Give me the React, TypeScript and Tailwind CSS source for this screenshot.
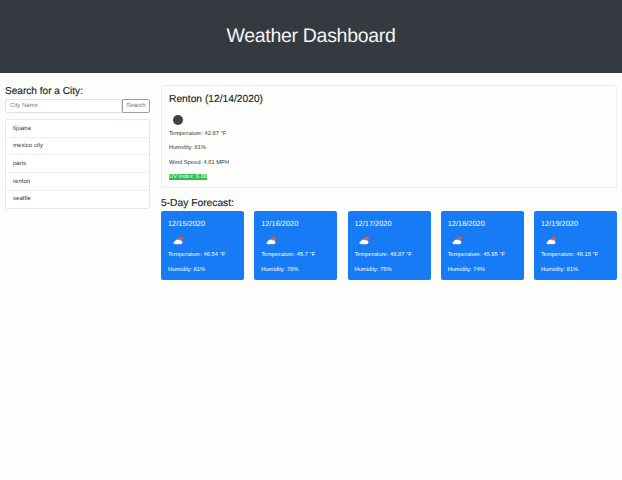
const cities = ["tijuana", "mexico city", "paris", "renton", "seattle"];
const forecast = [
  { date: "12/15/2020", temp: "46.54", hum: "81" },
  { date: "12/16/2020", temp: "45.7", hum: "78" },
  { date: "12/17/2020", temp: "48.87", hum: "75" },
  { date: "12/18/2020", temp: "45.95", hum: "74" },
  { date: "12/19/2020", temp: "46.15", hum: "81" },
];

function CloudIcon() {
  return (
    <svg width="11" height="9.500" viewBox="0 0 13 11" className="block">
      <circle cx="9" cy="3.200" r="2.700" fill="#e8573f" />
      <path d="M2.800 9.500c-2.800 0-2.800-3.200-.4-3.400C3 4.200 5.800 3.200 7.400 5c2.400-.5 3.900.9 3.700 2.500-.1 1.300-1.100 2-2.300 2z" fill="#ffffff" />
      <path d="M3.500 10.100h5" stroke="#5f86c4" strokeWidth="1" />
    </svg>
  );
}

export default function App() {
  return (
    <div className="min-h-[480px] bg-[#fdfdfb] font-['Liberation_Sans',sans-serif] text-[#212529] [text-rendering:geometricPrecision]">
      <header className="flex h-[73px] items-center justify-center bg-[#343a40]">
        <h1 className="text-[19.500px] leading-none tracking-[-0.3px] text-[#f4f5f5]">Weather Dashboard</h1>
      </header>
      <main className="flex items-start gap-[11px] pl-[5px] pr-[5px] pt-[12px]">
        <aside className="w-[145px] shrink-0">
          <h2 className="text-[10.100px] leading-[14px] [-webkit-text-stroke:0.15px]">Search for a City:</h2>
          <div className="flex h-[14px] text-[6px]">
            <div className="flex flex-1 items-center rounded-l-[2px] border border-[#dfe2e6] bg-white pl-[4px] text-[#7b8288]">City Name</div>
            <div className="flex w-[28px] items-center justify-center rounded-r-[2px] border border-[#9aa0a5] text-[#6c757d]">Search</div>
          </div>
          <ul className="mt-[6px] flex h-[89.500px] flex-col rounded-[2px] border border-[#e9e9e9] bg-white">
            {cities.map((c, i) => (
              <li key={c} className={`flex flex-1 items-center pl-[7px] pt-[1.500px] text-[6.070px] text-[#343a40] ${i ? "border-t border-[#efefef]" : ""}`}>{c}</li>
            ))}
          </ul>
        </aside>
        <section className="flex-1">
          <div className="h-[103px] rounded-[2px] border border-[#ececec] bg-[#fdfdfb] pl-[7px] pt-[7px]">
            <h2 className="text-[10.250px] leading-[13px] [-webkit-text-stroke:0.15px]">Renton (12/14/2020)</h2>
            <div className="ml-[4px] mt-[9px] h-[10px] w-[10px] rounded-full bg-[#3f4145]" />
            <div className="mt-[4.500px] flex flex-col gap-[6.600px] text-[5.760px] leading-[8px] text-[#343a40]">
              <p>Temperature: 42.87 °F</p>
              <p>Humidity: 81%</p>
              <p>Wind Speed: 4.61 MPH</p>
              <p><span className="bg-[#28c050] text-white">UV Index: 0.68</span></p>
            </div>
          </div>
          <h2 className="mb-[1px] mt-[9px] text-[10.250px] leading-[13px] [-webkit-text-stroke:0.15px]">5-Day Forecast:</h2>
          <div className="flex justify-between">
            {forecast.map((f) => (
              <div key={f.date} className="h-[69px] w-[83px] rounded-[2px] bg-[#177bf5] pl-[7px] pt-[8px] text-white">
                <div className="text-[7.400px] leading-[10px]">{f.date}</div>
                <div className="ml-[4.500px] mt-[7px]"><CloudIcon /></div>
                <div className="mt-[5.500px] flex flex-col gap-[6.600px] text-[5.760px] leading-[8px]">
                  <p>Temperature: {f.temp} °F</p>
                  <p>Humidity: {f.hum}%</p>
                </div>
              </div>
            ))}
          </div>
        </section>
      </main>
    </div>
  );
}
